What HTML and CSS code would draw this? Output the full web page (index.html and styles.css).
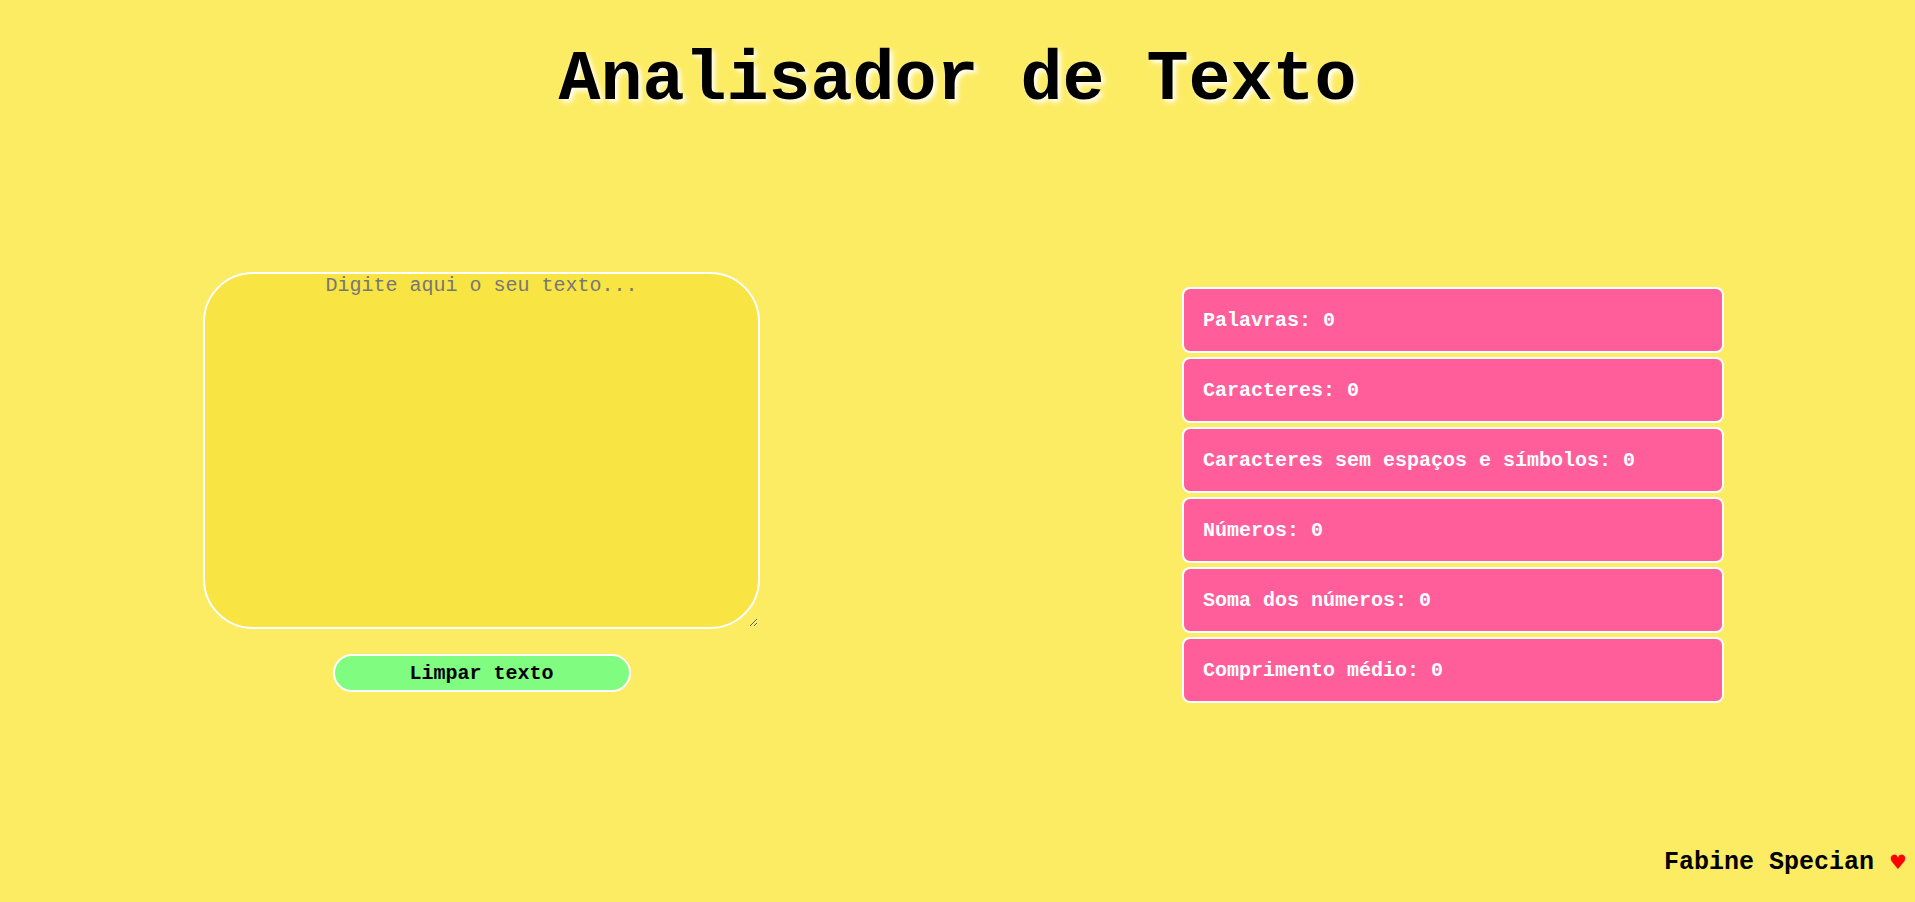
FILE: index.html
```html
<!DOCTYPE html>
<html lang="pt-BR">
<head>
<meta charset="UTF-8">
<title>Analisador de Texto</title>
<link rel="stylesheet" href="styles.css">
</head>
<body>
<h1 class="title">Analisador de Texto</h1>
<main class="main">
  <section class="editor">
    <textarea class="text-input" placeholder="Digite aqui o seu texto..."></textarea>
    <button class="clear-btn" type="button">Limpar texto</button>
  </section>
  <section class="stats">
    <div class="stat">Palavras: 0</div>
    <div class="stat">Caracteres: 0</div>
    <div class="stat">Caracteres sem espaços e símbolos: 0</div>
    <div class="stat">Números: 0</div>
    <div class="stat">Soma dos números: 0</div>
    <div class="stat">Comprimento médio: 0</div>
  </section>
</main>
<footer class="footer">Fabine Specian <span class="heart">♥</span></footer>
</body>
</html>
```
FILE: styles.css
```css
html, body {
  margin: 0;
  padding: 0;
}
body {
  min-height: 100vh;
  display: flex;
  flex-direction: column;
  background: #fcec64;
  font-family: "Liberation Mono", "Courier New", monospace;
  color: #000;
}
.title {
  margin: 0;
  padding-top: 40px;
  font-size: 70px;
  line-height: 82px;
  font-weight: bold;
  text-align: center;
  text-shadow: 3px 3px 5px #fff;
}
.main {
  display: flex;
  align-items: flex-start;
  margin-top: 150px;
}
.editor {
  margin-left: 203px;
  width: 557px;
  display: flex;
  flex-direction: column;
  align-items: center;
}
.text-input {
  box-sizing: border-box;
  width: 557px;
  height: 357px;
  border: 2px solid #fff;
  border-radius: 50px;
  background: #f8e443;
  font-family: "Liberation Mono", "Courier New", monospace;
  font-size: 20px;
  text-align: center;
  padding: 0 2px 2px;
  outline: none;
  margin: 0;
}
.text-input::placeholder {
  color: #777;
}
.clear-btn {
  box-sizing: border-box;
  margin-top: 25px;
  width: 298px;
  height: 38px;
  border: 2px solid #fff;
  border-radius: 20px;
  background: #80fc80;
  font-family: "Liberation Mono", "Courier New", monospace;
  font-weight: bold;
  font-size: 20px;
  color: #000;
}
.stats {
  margin-left: 422px;
  margin-top: 15px;
  width: 542px;
  display: flex;
  flex-direction: column;
  gap: 4px;
}
.stat {
  box-sizing: border-box;
  height: 66px;
  display: flex;
  align-items: center;
  padding-left: 19px;
  border: 2px solid #fff;
  border-radius: 8px;
  background: #ff5e9b;
  color: #fff;
  font-weight: bold;
  font-size: 20px;
}
.footer {
  margin-top: auto;
  text-align: right;
  padding-right: 8px;
  padding-bottom: 25px;
  font-weight: bold;
  font-size: 25px;
  line-height: 28px;
}
.heart {
  color: #f00;
  font-family: "DejaVu Sans", sans-serif;
  font-size: 20px;
}
```
